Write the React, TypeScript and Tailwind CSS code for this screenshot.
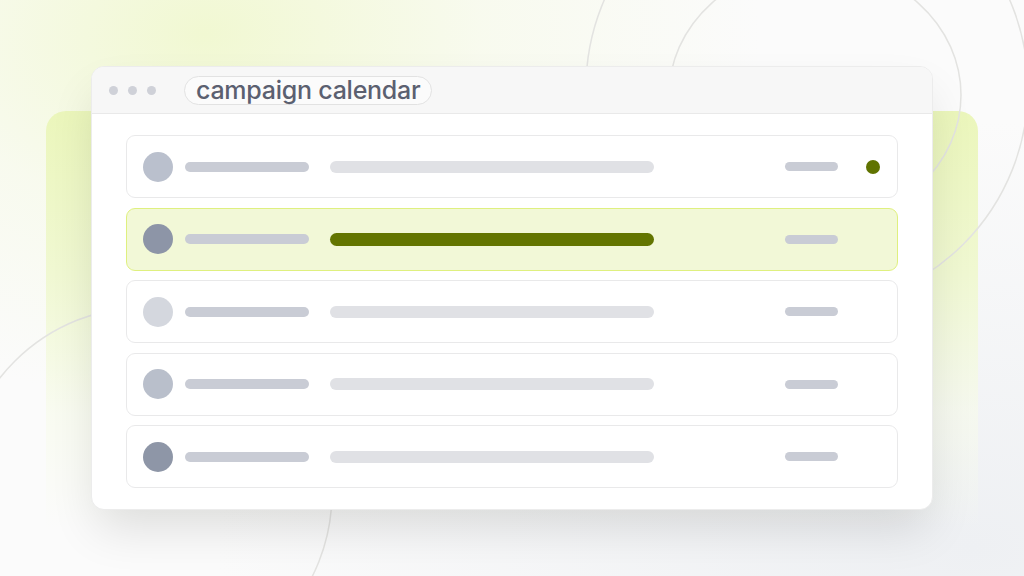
import React from 'react';

const ROWS = [
  { avatar: 'bg-[#bac0cd]', active: false, dot: true },
  { avatar: 'bg-[#8d95a7]', active: true, dot: false },
  { avatar: 'bg-[#d4d7de]', active: false, dot: false },
  { avatar: 'bg-[#b9bfcb]', active: false, dot: false },
  { avatar: 'bg-[#8e96a7]', active: false, dot: false },
];

function Backdrop() {
  return (
    <>
      {/* soft lime glow top-left, grey wash bottom-right */}
      <div className="pointer-events-none absolute inset-0 bg-[radial-gradient(ellipse_at_20%_6%,#f1f8d2_0%,rgba(246,250,230,0.6)_24%,transparent_48%)]" />
      <div className="pointer-events-none absolute inset-0 bg-[radial-gradient(ellipse_at_95%_95%,#eef0f3_0%,transparent_55%)]" />
      {/* lime card behind the window */}
      <div className="pointer-events-none absolute left-[46px] top-[111px] h-[465px] w-[932px] rounded-t-[20px] bg-[linear-gradient(180deg,#ebf6bb_0%,#f0f8d2_35%,rgba(247,251,234,0.6)_65%,rgba(255,255,255,0)_90%)]" />
      <svg className="pointer-events-none absolute inset-0" width="1024" height="576" viewBox="0 0 1024 576" fill="none">
        <circle cx="807" cy="88" r="221" stroke="#e3e3e1" strokeWidth="1.5" />
        <ellipse cx="815" cy="95" rx="146" ry="130" stroke="#e3e3e1" strokeWidth="1.5" />
        <circle cx="146" cy="493" r="186" stroke="#e3e3e1" strokeWidth="1.5" />
      </svg>
    </>
  );
}

function Row({ avatar, active, dot }: { avatar: string; active: boolean; dot: boolean }) {
  return (
    <div
      className={`flex h-[63px] items-center rounded-[9px] border pl-[16px] pr-[17px] ${
        active ? 'border-[#dff07f] bg-[#f2f8d7]' : 'border-[#e9e9ea] bg-white'
      }`}
    >
      <div className={`h-[30px] w-[30px] shrink-0 rounded-full ${avatar}`} />
      <div className="ml-[12px] h-[10px] w-[124px] rounded-full bg-[#c9ccd5]" />
      <div className={`ml-[21px] w-[324px] rounded-full ${active ? 'h-[13px] bg-[#637500]' : 'h-[12px] bg-[#e0e1e5]'}`} />
      <div className="ml-auto h-[9px] w-[53px] rounded-full bg-[#c9ccd5]" />
      <div className="ml-[28px] flex w-[14px] justify-center">
        {dot && <div className="h-[14px] w-[14px] rounded-full bg-[#607300]" />}
      </div>
    </div>
  );
}

export default function App() {
  return (
    <div className="relative h-[576px] w-[1024px] overflow-hidden bg-[#fbfbfb] font-['Inter',sans-serif]">
      <Backdrop />

      <div className="relative ml-[91px] pt-[66px]">
        <div className="w-[842px] overflow-hidden rounded-[13px] border border-[#ececec] bg-white shadow-[0_24px_48px_-6px_rgba(0,0,0,0.12)]">
          {/* title bar */}
          <div className="flex h-[47px] items-center border-b border-[#e9e9e9] bg-[#f7f7f7] pl-[17px]">
            <div className="flex gap-[10px]">
              <span className="h-[9px] w-[9px] rounded-full bg-[#cfd1d8]" />
              <span className="h-[9px] w-[9px] rounded-full bg-[#cfd1d8]" />
              <span className="h-[9px] w-[9px] rounded-full bg-[#cfd1d8]" />
            </div>
            <div className="ml-[28px] flex h-[29px] items-center rounded-full border border-[#e2e2e2] bg-[#fbfbfb] px-[11px] text-[25px] font-medium leading-none tracking-[-0.01em] text-[#5b6070]">
              campaign calendar
            </div>
          </div>

          {/* rows */}
          <div className="flex flex-col gap-[9.5px] px-[34px] pb-[21px] pt-[21px]">
            {ROWS.map((r, i) => (
              <Row key={i} {...r} />
            ))}
          </div>
        </div>
      </div>
    </div>
  );
}
